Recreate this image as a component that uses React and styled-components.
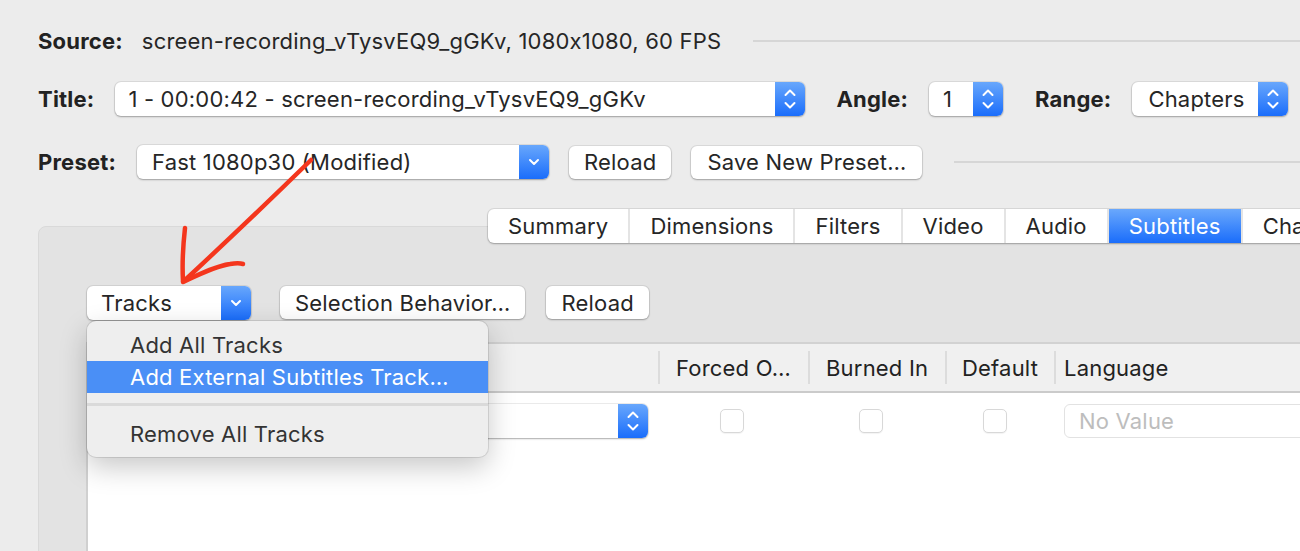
import React from "react";
import styled, { createGlobalStyle } from "styled-components";

const GlobalStyle = createGlobalStyle`
  html, body {
    margin: 0;
    width: 1300px;
    height: 551px;
    overflow: hidden;
    background: #ececec;
  }
  body {
    font-family: Inter, "Noto Sans", sans-serif;
    font-size: 22px;
    letter-spacing: 0.2px;
    font-feature-settings: "calt" 0;
    color: #262626;
    -webkit-font-smoothing: antialiased;
  }
`;

const Window = styled.div`
  position: relative;
  padding: 26px 0 0 38px;
  width: 1300px;
  box-sizing: border-box;
`;

const Row = styled.div`
  display: flex;
  align-items: center;
  height: ${(p) => p.$h || 34}px;
  margin-top: ${(p) => p.$mt || 0}px;
  white-space: nowrap;
`;

const Label = styled.span`
  font-weight: 700;
  color: #222;
  margin-right: ${(p) => p.$mr || 21}px;
  margin-left: ${(p) => p.$ml || 0}px;
`;

const Value = styled.span`
  color: #262626;
`;

const Rule = styled.div`
  flex: 1;
  height: 2px;
  background: #d6d6d6;
  margin-left: 32px;
`;

const PopupBox = styled.div`
  position: relative;
  display: flex;
  align-items: center;
  width: ${(p) => p.$w}px;
  height: 34px;
  margin-left: ${(p) => p.$ml || 0}px;
  box-sizing: border-box;
  background: #fff;
  border-radius: 6px;
  box-shadow: 0 0 0 1px rgba(0, 0, 0, 0.07), 0 1px 2px rgba(0, 0, 0, 0.28);
  flex-shrink: 0;
`;

const PopupText = styled.span`
  flex: 1;
  padding-left: ${(p) => p.$pl || 14}px;
  overflow: hidden;
`;

const ArrowBox = styled.div`
  width: 30px;
  align-self: stretch;
  display: flex;
  align-items: center;
  justify-content: center;
  border-radius: 0 6px 6px 0;
  background: linear-gradient(#68a7fc, #1a6dfb);
`;

const Button = styled.div`
  height: 33px;
  display: flex;
  align-items: center;
  padding: 0 ${(p) => p.$px || 15}px;
  margin-left: ${(p) => p.$ml || 0}px;
  background: #fff;
  border-radius: 6px;
  box-shadow: 0 0 0 1px rgba(0, 0, 0, 0.07), 0 1px 2px rgba(0, 0, 0, 0.28);
  flex-shrink: 0;
`;

const TabView = styled.div`
  margin-top: 30px;
  display: flex;
  flex-direction: column;
`;

const TabBar = styled.div`
  display: flex;
  align-self: flex-start;
  margin-left: 450px;
  margin-bottom: -17px;
  height: 34px;
  background: #fff;
  border-radius: 6px 0 0 6px;
  box-shadow: 0 0 0 1px rgba(0, 0, 0, 0.08), 0 1px 2px rgba(0, 0, 0, 0.25);
  position: relative;
  z-index: 2;
  white-space: nowrap;
`;

const Tab = styled.div`
  display: flex;
  align-items: center;
  padding: 0 20px;
  border-left: ${(p) => (p.$first ? "none" : "2px solid #e4e4e4")};
  color: ${(p) => (p.$active ? "#fff" : "#262626")};
  background: ${(p) => (p.$active ? "linear-gradient(#6aa8fc, #1a6dfb)" : "transparent")};
`;

const Panel = styled.div`
  width: 1320px;
  height: 360px;
  background: #e3e3e3;
  border: 1px solid #d9d9d9;
  border-radius: 8px;
  padding: 58px 0 0 48px;
  box-sizing: border-box;
  display: flex;
  flex-direction: column;
`;

const TrackBar = styled.div`
  display: flex;
  align-items: center;
  height: 35px;
`;

const TracksWrap = styled.div`
  position: relative;
`;

const Table = styled.div`
  margin-top: 22px;
  flex: 1;
  background: #fff;
  border-left: 2px solid #d0d0d0;
  margin-left: -1px;
`;

const Grid = styled.div`
  display: grid;
  grid-template-columns: 570px 150px 137px 109px 1fr;
`;

const Header = styled(Grid)`
  height: 47px;
  background: #f0f0f0;
  border-top: 2px solid #d2d2d2;
  border-bottom: 2px solid #cbcbcb;
`;

const HeadCell = styled.div`
  display: flex;
  align-items: center;
  padding-left: ${(p) => p.$pl || 16}px;
  margin: 7px 0;
  border-left: ${(p) => (p.$first ? "none" : "2px solid #dcdcdc")};
  color: #222;
  white-space: nowrap;
`;

const BodyRow = styled(Grid)`
  height: 56px;
  align-items: center;
`;

const Cell = styled.div`
  display: flex;
  align-items: center;
  justify-content: ${(p) => p.$align || "center"};
  padding-left: ${(p) => p.$pl || 0}px;
  padding-right: ${(p) => p.$pr || 0}px;
`;

const Checkbox = styled.div`
  width: 24px;
  height: 24px;
  box-sizing: border-box;
  border: 1.5px solid #d8d8d8;
  border-radius: 5px;
  background: #fff;
  box-shadow: 0 1px 1px rgba(0, 0, 0, 0.05);
`;

const TextField = styled.div`
  width: 300px;
  height: 34px;
  box-sizing: border-box;
  border: 1.5px solid #e2e2e2;
  border-radius: 6px;
  display: flex;
  align-items: center;
  padding-left: 14px;
  color: #bdbdbd;
`;

const Menu = styled.div`
  position: absolute;
  top: calc(100% + 1px);
  left: 0;
  width: 401px;
  padding: 8px 0 7px;
  background: #eeeeee;
  border-radius: 9px;
  box-shadow: 0 0 0 1px rgba(0, 0, 0, 0.1), 0 10px 28px rgba(0, 0, 0, 0.22);
  z-index: 10;
  white-space: nowrap;
`;

const MenuItem = styled.div`
  height: 32px;
  display: flex;
  align-items: center;
  padding-left: 43px;
  color: ${(p) => (p.$hl ? "#fff" : "#333")};
  background: ${(p) => (p.$hl ? "#4a8ff6" : "transparent")};
`;

const MenuSeparator = styled.div`
  height: 3px;
  background: #dadada;
  margin: 10px 0 12px;
`;

const Annotation = styled.svg`
  position: absolute;
  left: 0;
  top: 0;
  pointer-events: none;
  z-index: 20;
`;

const Stepper = () => (
  <svg width="12" height="26" viewBox="0 0 12 26" fill="none" stroke="#fff" strokeWidth="2" strokeLinecap="round" strokeLinejoin="round">
    <path d="M1.5 9 L6 4.5 L10.5 9" />
    <path d="M1.5 17 L6 21.5 L10.5 17" />
  </svg>
);

const Chevron = () => (
  <svg width="12" height="10" viewBox="0 0 12 10" fill="none" stroke="#fff" strokeWidth="2" strokeLinecap="round" strokeLinejoin="round">
    <path d="M2 3 L6 7 L10 3" />
  </svg>
);

const Popup = ({ w, ml, pl, text, kind = "stepper" }) => (
  <PopupBox $w={w} $ml={ml}>
    <PopupText $pl={pl}>{text}</PopupText>
    <ArrowBox>{kind === "stepper" ? <Stepper /> : <Chevron />}</ArrowBox>
  </PopupBox>
);

const tabs = ["Summary", "Dimensions", "Filters", "Video", "Audio", "Subtitles", "Chapters"];

export default function App() {
  return (
    <>
      <GlobalStyle />
      <Window>
        <Row $h={30}>
          <Label $mr={19}>Source:</Label>
          <Value>screen-recording_vTysvEQ9_gGKv, 1080x1080, 60 FPS</Value>
          <Rule />
        </Row>

        <Row $mt={26}>
          <Label>Title:</Label>
          <Popup w={690} pl={13} text="1 - 00:00:42 - screen-recording_vTysvEQ9_gGKv" />
          <Label $ml={31}>Angle:</Label>
          <Popup w={74} pl={14} text="1" />
          <Label $ml={32}>Range:</Label>
          <Popup w={156} pl={16} text="Chapters" />
        </Row>

        <Row $mt={29}>
          <Label>Preset:</Label>
          <Popup w={412} pl={15} text="Fast 1080p30 (Modified)" kind="chevron" />
          <Button $ml={20} $px={15}>Reload</Button>
          <Button $ml={20} $px={16}>Save New Preset…</Button>
          <Rule />
        </Row>

        <TabView>
          <TabBar>
            {tabs.map((t, i) => (
              <Tab key={t} $first={i === 0} $active={t === "Subtitles"}>
                {t}
              </Tab>
            ))}
          </TabBar>
          <Panel>
            <TrackBar>
              <TracksWrap>
                <Popup w={164} pl={14} text="Tracks" kind="chevron" />
                <Menu>
                  <MenuItem>Add All Tracks</MenuItem>
                  <MenuItem $hl>Add External Subtitles Track…</MenuItem>
                  <MenuSeparator />
                  <MenuItem>Remove All Tracks</MenuItem>
                </Menu>
              </TracksWrap>
              <Button $ml={29} $px={15}>Selection Behavior…</Button>
              <Button $ml={21} $px={15}>Reload</Button>
            </TrackBar>

            <Table>
              <Header>
                <HeadCell $first />
                <HeadCell>Forced O…</HeadCell>
                <HeadCell>Burned In</HeadCell>
                <HeadCell $pl={15}>Default</HeadCell>
                <HeadCell $pl={8}>Language</HeadCell>
              </Header>
              <BodyRow>
                <Cell $align="flex-end" $pr={10}>
                  <Popup w={530} text="" />
                </Cell>
                <Cell $pr={2}>
                  <Checkbox />
                </Cell>
                <Cell $pr={12}>
                  <Checkbox />
                </Cell>
                <Cell $pr={10}>
                  <Checkbox />
                </Cell>
                <Cell $align="flex-start" $pl={10}>
                  <TextField>No Value</TextField>
                </Cell>
              </BodyRow>
            </Table>
          </Panel>
        </TabView>

        <Annotation width="1300" height="551" viewBox="0 0 1300 551" fill="none" stroke="#f4361d" strokeWidth="4.5" strokeLinecap="round" strokeLinejoin="round">
          <path d="M311 160 C 268 202, 226 242, 184 281" />
          <path d="M185 228 C 183 246, 182 264, 183 281" />
          <path d="M183 282 C 200 274, 216 266, 230 264 C 236 263, 240 263, 243 264" />
        </Annotation>
      </Window>
    </>
  );
}
